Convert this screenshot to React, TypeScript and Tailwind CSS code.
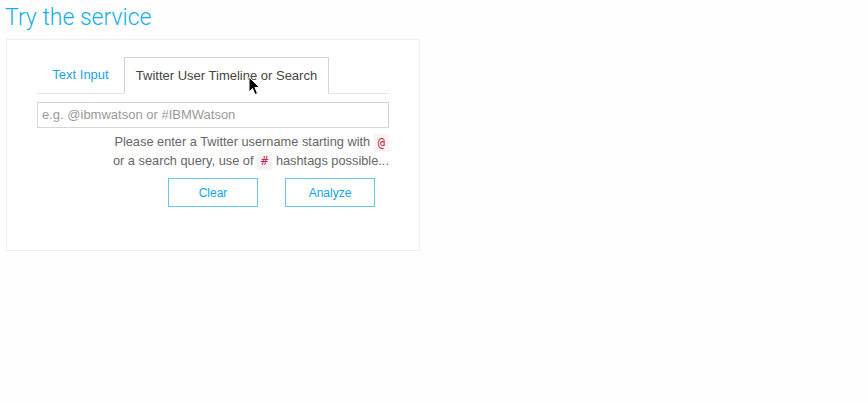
import React from "react";

export default function App() {
  const chip = "inline-block px-[4px] leading-[18px] bg-[#f9f2f4] text-[#c7254e] text-[12px] align-middle";
  return (
    <div className="relative w-[868px] h-[403px] bg-[#fefefe] overflow-hidden" style={{ fontFamily: '"Liberation Sans", Arial, sans-serif' }}>
      <h2 className="pl-[5px] pt-[3px] text-[23px] leading-[30px] font-light text-[#12aef0]" style={{ fontFamily: 'Roboto, "Liberation Sans", sans-serif' }}>
        Try the service
      </h2>
      <div className="ml-[6px] mt-[6px] w-[414px] h-[212px] border border-[#efefef] bg-white px-[30px] pt-[17px]">
        <div className="flex items-end border-b border-[#e6e6e6] h-[37px]">
          <div className="w-[87px] h-[37px] flex items-center justify-center text-[13px] text-[#1ba3e6]">Text Input</div>
          <div className="w-[205px] h-[37px] -mb-px border border-[#d3d3d3] border-b-white bg-white flex items-center justify-center text-[13px] text-[#444]">
            Twitter User Timeline or Search
          </div>
        </div>
        <div className="mt-[8px] h-[26px] border border-[#d6d6d6] flex items-center px-[4px] text-[13px] text-[#9a9a9a]">
          e.g. @ibmwatson or #IBMWatson
        </div>
        <div className="mt-[5px] text-right text-[12.8px] leading-[18px] text-[#666]">
          <div>
            Please enter a Twitter username starting with{" "}
            <code className={chip} style={{ fontFamily: '"DejaVu Sans Mono", monospace' }}>@</code>
          </div>
          <div>
            or a search query, use of{" "}
            <code className={chip} style={{ fontFamily: '"DejaVu Sans Mono", monospace' }}>#</code>{" "}
            hashtags possible...
          </div>
        </div>
        <div className="mt-[8px] flex justify-end gap-[27px] pr-[14px]">
          <button className="w-[90px] h-[29px] border border-[#67c6ef] text-[12px] text-[#12a4ea] bg-white">Clear</button>
          <button className="w-[90px] h-[29px] border border-[#67c6ef] text-[12px] text-[#12a4ea] bg-white">Analyze</button>
        </div>
      </div>
      <svg className="absolute left-[248px] top-[76px]" width="13" height="20" viewBox="0 0 13 20">
        <path d="M1 1 L1 16 L4.5 12.5 L7 18.5 L9.5 17.5 L7 11.5 L11.5 11.5 Z" fill="#000" stroke="#fff" strokeWidth="1" strokeLinejoin="round" />
      </svg>
    </div>
  );
}
